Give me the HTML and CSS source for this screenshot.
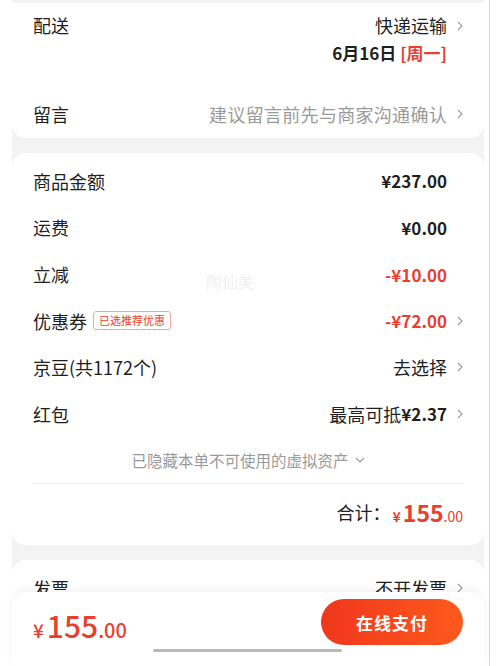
FILE: index.html
```html
<!DOCTYPE html>
<html lang="zh-CN">
<head>
    <meta charset="UTF-8">
    <meta name="viewport" content="width=device-width, initial-scale=1.0">
    <title>确认订单</title>
    <link rel="stylesheet" href="styles.css">
</head>
<body>
    <div class="screen">
        <div class="page">
            <section class="card card-top">
                <div class="row row-delivery">
                    <span class="label">配送</span>
                    <div class="delivery-info">
                        <div class="line">快递运输<svg class="chev" viewBox="0 0 6 10"><polyline points="1,1 5,5 1,9"/></svg></div>
                        <div class="line date">6月16日 <span class="red">[周一]</span></div>
                    </div>
                </div>
                <div class="row">
                    <span class="label">留言</span>
                    <span class="value muted wide">建议留言前先与商家沟通确认<svg class="chev" viewBox="0 0 6 10"><polyline points="1,1 5,5 1,9"/></svg></span>
                </div>
            </section>

            <section class="card card-price">
                <div class="row">
                    <span class="label">商品金额</span>
                    <span class="value price">¥237.00</span>
                </div>
                <div class="row">
                    <span class="label">运费</span>
                    <span class="value price">¥0.00</span>
                </div>
                <div class="row">
                    <span class="label">立减</span>
                    <span class="value price red">-¥10.00</span>
                </div>
                <div class="row">
                    <span class="label">优惠券 <span class="tag">已选推荐优惠</span></span>
                    <span class="value price red">-¥72.00<svg class="chev" viewBox="0 0 6 10"><polyline points="1,1 5,5 1,9"/></svg></span>
                </div>
                <div class="row">
                    <span class="label">京豆(共1172个)</span>
                    <span class="value">去选择<svg class="chev" viewBox="0 0 6 10"><polyline points="1,1 5,5 1,9"/></svg></span>
                </div>
                <div class="row">
                    <span class="label">红包</span>
                    <span class="value">最高可抵<b class="price">¥2.37</b><svg class="chev" viewBox="0 0 6 10"><polyline points="1,1 5,5 1,9"/></svg></span>
                </div>
                <div class="hidden-assets">
                    已隐藏本单不可使用的虚拟资产
                    <svg class="down" viewBox="0 0 10 6"><polyline points="1,1 5,5 9,1"/></svg>
                </div>
                <div class="total">
                    合计：<span class="amount"><small>¥</small>155<small>.00</small></span>
                </div>
                <div class="watermark">陶仙美</div>
            </section>

            <section class="card card-invoice">
                <div class="row">
                    <span class="label">发票</span>
                    <span class="value">不开发票<svg class="chev" viewBox="0 0 6 10"><polyline points="1,1 5,5 1,9"/></svg></span>
                </div>
            </section>
        </div>
        <div class="side-edge"></div>

        <footer class="pay-bar">
            <div class="pay-amount"><span class="yen">¥</span>155<span class="cents">.00</span></div>
            <button class="pay-btn">在线支付</button>
            <div class="home-indicator"></div>
        </footer>
    </div>
</body>
</html>
```

FILE: styles.css
```css
body, html {
    margin: 0;
    padding: 0;
    background: #fff;
    font-family: "Noto Sans CJK SC", "Noto Sans", sans-serif;
    color: #1f1f1f;
}
.screen {
    position: relative;
    width: 500px;
    height: 666px;
    overflow: hidden;
    display: flex;
}
.page {
    width: 472px;
    margin-left: 12px;
    padding-top: 3px;
    background: #f3f3f3;
    display: flex;
    flex-direction: column;
    gap: 15px;
}
.side-edge {
    width: 1px;
    margin-left: 5px;
    background: #d4d4d4;
}
.card {
    position: relative;
    background: #fff;
    border-radius: 14px;
    padding: 0 21px 0 21px;
}
.row {
    display: flex;
    justify-content: space-between;
    align-items: center;
    height: 46.6px;
    font-size: 18px;
}
.label {
    display: flex;
    align-items: center;
    gap: 4px;
}
.value {
    display: flex;
    align-items: center;
    padding-right: 16px;
}
.value:has(.chev) {
    padding-right: 0;
}
.chev {
    width: 6px;
    height: 10px;
    margin-left: 10px;
    fill: none;
    stroke: #9a9a9a;
    stroke-width: 1.1;
}
.muted {
    color: #9a9a9a;
}
.wide {
    letter-spacing: 0.3px;
}
.red {
    color: #e8402f;
}
.price {
    font-weight: 700;
    font-size: 17px;
}

/* top card */
.card-top {
    border-radius: 0 0 14px 14px;
}
.row-delivery {
    height: auto;
    align-items: flex-start;
    padding: 9px 0 25px;
}
.row-delivery .label {
    line-height: 27px;
}
.delivery-info {
    display: flex;
    flex-direction: column;
    align-items: flex-end;
}
.delivery-info .line {
    display: flex;
    align-items: center;
    line-height: 27px;
}
.delivery-info .date {
    font-weight: 700;
    font-size: 17px;
    padding-right: 16px;
    white-space: pre;
}

/* price card */
.card-price {
    padding-top: 5px;
    padding-bottom: 5px;
}
.tag {
    font-size: 11px;
    color: #e8402f;
    border: 1px solid #f0a7a0;
    border-radius: 3px;
    padding: 0 5px;
    line-height: 17px;
    margin-left: 2px;
}
.hidden-assets {
    height: 46px;
    display: flex;
    justify-content: center;
    align-items: center;
    font-size: 15.5px;
    color: #9a9a9a;
    border-bottom: 1px solid #f0f0f0;
}
.down {
    width: 10px;
    height: 6px;
    margin-left: 6px;
    fill: none;
    stroke: #9a9a9a;
    stroke-width: 1.2;
}
.total {
    height: 56px;
    display: flex;
    justify-content: flex-end;
    align-items: center;
    font-size: 18px;
}
.total .amount {
    color: #e8402f;
    font-weight: 700;
    font-size: 23px;
    margin-left: 2px;
}
.total small {
    font-size: 14px;
    font-weight: 400;
}
.total small:first-child {
    font-weight: 700;
    margin-right: 2px;
}
.watermark {
    position: absolute;
    left: 194px;
    top: 116px;
    font-size: 16px;
    color: #f0f0f0;
}

/* invoice */
.card-invoice {
    flex: 1;
    padding-top: 5px;
    border-radius: 14px 14px 0 0;
}

/* pay bar */
.pay-bar {
    position: absolute;
    left: 12px;
    top: 592px;
    width: 472px;
    height: 74px;
    background: #fff;
    border-radius: 14px 14px 0 0;
    box-shadow: 0 -3px 8px rgba(0, 0, 0, 0.05);
    display: flex;
    justify-content: space-between;
    align-items: flex-start;
    padding: 7px 21px 0;
    box-sizing: border-box;
}
.pay-amount {
    color: #e8402f;
    font-size: 30px;
    font-weight: 500;
    line-height: 52px;
}
.pay-amount .yen {
    font-size: 19px;
    margin-right: 3px;
}
.pay-amount .cents {
    font-size: 20px;
}
.pay-btn {
    width: 142px;
    height: 46px;
    border: none;
    border-radius: 23px;
    background: linear-gradient(90deg, #f0371c, #fe5a1c);
    color: #fff;
    font-family: inherit;
    font-size: 17px;
    font-weight: 700;
    letter-spacing: 1px;
}
.home-indicator {
    position: absolute;
    left: 141px;
    top: 57px;
    width: 189px;
    height: 3px;
    border-radius: 2px;
    background: #b8b8b8;
}
```
